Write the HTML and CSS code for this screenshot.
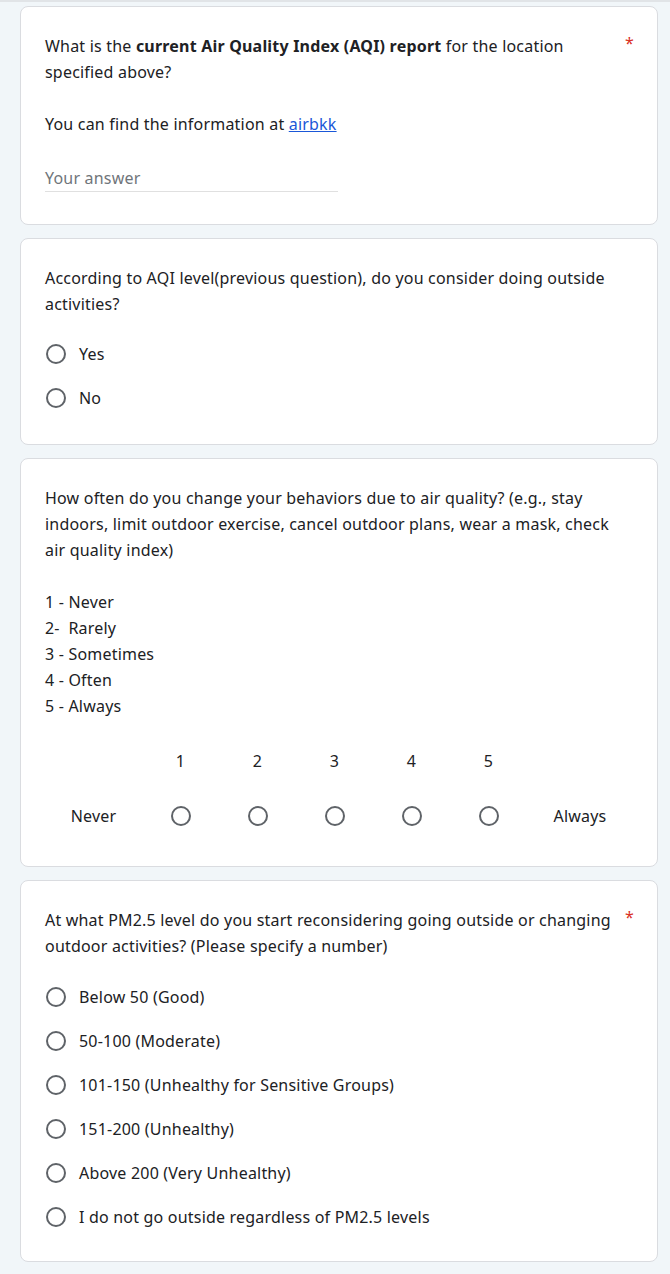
FILE: index.html
```html
<!DOCTYPE html>
<html lang="en">
<head>
<meta charset="utf-8">
<title>Air quality survey</title>
<link rel="stylesheet" href="styles.css">
</head>
<body>
<div class="top-rule"></div>
<main class="form">
  <section class="card">
    <div class="q-head">
      <div class="q-title">What is the <b>current Air Quality Index (AQI) report</b> for the location specified above?</div>
      <span class="req">*</span>
    </div>
    <div class="q-desc">You can find the information at <a href="#">airbkk</a></div>
    <div class="answer">Your answer</div>
  </section>

  <section class="card">
    <div class="q-head">
      <div class="q-title">According to AQI level(previous question), do you consider doing outside activities?</div>
    </div>
    <div class="options">
      <label class="opt"><span class="radio"></span><span>Yes</span></label>
      <label class="opt"><span class="radio"></span><span>No</span></label>
    </div>
  </section>

  <section class="card">
    <div class="q-head">
      <div class="q-title">How often do you change your behaviors due to air quality? (e.g., stay indoors, limit outdoor exercise, cancel outdoor plans, wear a mask, check air quality index)</div>
    </div>
    <div class="q-desc">1 - Never<br>2-&nbsp; Rarely<br>3 - Sometimes<br>4 - Often<br>5 - Always</div>
    <div class="scale">
      <span></span>
      <span class="num">1</span><span class="num">2</span><span class="num">3</span><span class="num">4</span><span class="num">5</span>
      <span></span>
      <span class="end">Never</span>
      <span class="cell"><span class="radio"></span></span>
      <span class="cell"><span class="radio"></span></span>
      <span class="cell"><span class="radio"></span></span>
      <span class="cell"><span class="radio"></span></span>
      <span class="cell"><span class="radio"></span></span>
      <span class="end">Always</span>
    </div>
  </section>

  <section class="card last">
    <div class="q-head">
      <div class="q-title">At what PM2.5 level do you start reconsidering going outside or changing outdoor activities? (Please specify a number)</div>
      <span class="req">*</span>
    </div>
    <div class="options wide">
      <label class="opt"><span class="radio"></span><span>Below 50 (Good)</span></label>
      <label class="opt"><span class="radio"></span><span>50-100 (Moderate)</span></label>
      <label class="opt"><span class="radio"></span><span>101-150 (Unhealthy for Sensitive Groups)</span></label>
      <label class="opt"><span class="radio"></span><span>151-200 (Unhealthy)</span></label>
      <label class="opt"><span class="radio"></span><span>Above 200 (Very Unhealthy)</span></label>
      <label class="opt"><span class="radio"></span><span>I do not go outside regardless of PM2.5 levels</span></label>
    </div>
  </section>
</main>
</body>
</html>
```

FILE: styles.css
```css
* { box-sizing: border-box; }
html, body {
  margin: 0;
  padding: 0;
  background: #f1f6f9;
}
body {
  font-family: "Noto Sans", "Open Sans", Arial, sans-serif;
  font-size: 16px;
  letter-spacing: 0.2px;
  line-height: 26px;
  color: #202124;
}
.top-rule {
  height: 2px;
  background: #e1e4e7;
}
.form {
  display: flex;
  flex-direction: column;
  gap: 13px;
  padding: 4px 12px 12px 20px;
}
.card {
  background: #fff;
  border: 1px solid #dadce0;
  border-radius: 8px;
  padding: 26px 24px 24px 24px;
}
.q-head {
  display: flex;
  align-items: flex-start;
  gap: 10px;
}
.q-title {
  flex: 1;
}
.q-title b { font-weight: 700; }
.req {
  color: #d93025;
  width: 8px;
  line-height: 20px;
}
.q-desc {
  margin-top: 26px;
}
.q-desc a {
  color: #1a57d8;
  text-decoration: underline;
}
.answer {
  margin-top: 28px;
  width: 293px;
  height: 27px;
  color: #70757a;
  border-bottom: 1px solid #e0e0e0;
  line-height: 26px;
  margin-bottom: 8px;
}
.options {
  margin-top: 15px;
  display: flex;
  flex-direction: column;
}
.options.wide { margin-top: 16px; }
.opt {
  display: flex;
  align-items: center;
  gap: 13px;
  height: 44px;
}
.radio {
  display: inline-block;
  width: 20px;
  height: 20px;
  border: 2px solid #5f6368;
  border-radius: 50%;
  margin-left: 1px;
  flex: none;
}
.scale {
  display: grid;
  grid-template-columns: 97px repeat(5, 77px) 1fr;
  grid-template-rows: 24px 44px;
  row-gap: 21px;
  margin-top: 30px;
  margin-bottom: 4px;
  align-items: center;
  text-align: center;
}
.scale .cell {
  display: flex;
  justify-content: center;
  align-items: center;
}
.scale .cell .radio { margin-left: 0; }
.card.last { padding-bottom: 22px; }
```
